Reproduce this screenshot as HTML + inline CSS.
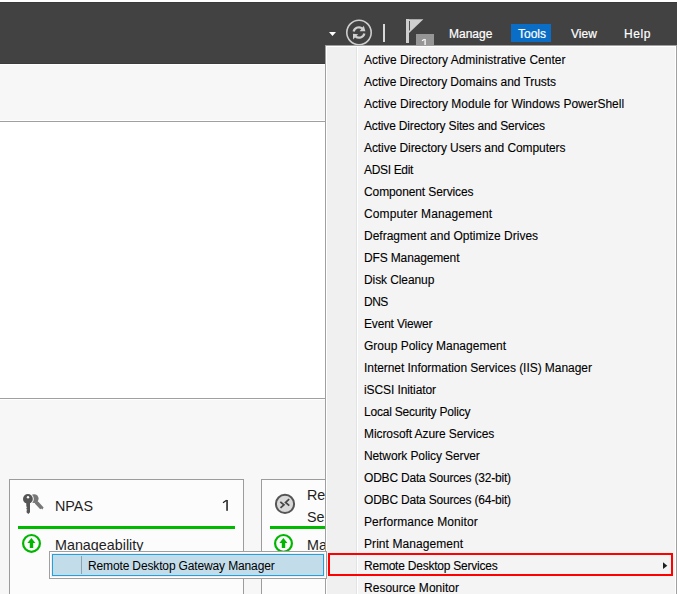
<!DOCTYPE html>
<html>
<head>
<meta charset="utf-8">
<style>
*{margin:0;padding:0;box-sizing:border-box}
html,body{width:677px;height:594px;overflow:hidden;background:#f7f7f7;font-family:"Liberation Sans",sans-serif}
.abs{position:absolute}
#hdr{left:0;top:0;width:677px;height:64px;background:#424242;border-top:2px solid #ffffff}
#hdrtop{left:0;top:2px;width:677px;height:1px;background:#3a3a3a}
#hdrline{left:0;top:63px;width:677px;height:1px;background:#3b3b3b}
#band{left:0;top:64px;width:677px;height:57px;background:#f7f7f7}
#bandhi{left:0;top:64px;width:677px;height:1px;background:#fdfdfd}
#bandw{left:0;top:120px;width:677px;height:1px;background:#ffffff}
#line1{left:0;top:121px;width:677px;height:1px;background:#a0a0a0}
#white{left:0;top:122px;width:677px;height:276px;background:#ffffff}
#line2{left:0;top:398px;width:677px;height:1px;background:#a0a0a0}
#line2w{left:0;top:399px;width:677px;height:1px;background:#ffffff}
.tile{background:#fcfcfc;border:1px solid #9c9c9c;border-bottom:none}
.green{background:#00ba00;height:3px}
.ttl{font-size:15px;transform-origin:0 0;transform:scaleX(0.955);color:#1e1e1e;white-space:nowrap;line-height:22px}
.mi{position:absolute;left:364px;font-size:12px;color:#000000;-webkit-text-stroke:0.1px #000;white-space:nowrap;line-height:22px;height:22px}
.hm{position:absolute;font-size:12px;color:#ffffff;white-space:nowrap;line-height:18px;top:25px;-webkit-text-stroke:0.2px #ffffff}
</style>
</head>
<body>
<div id="hdr" class="abs"></div>
<div id="hdrline" class="abs"></div>
<div id="hdrtop" class="abs"></div>
<div id="band" class="abs"></div>
<div id="bandhi" class="abs"></div>
<div id="bandw" class="abs"></div>
<div id="line1" class="abs"></div>
<div id="white" class="abs"></div>
<div id="line2" class="abs"></div>
<div id="line2w" class="abs"></div>

<!-- header icons -->
<svg class="abs" style="left:0;top:0" width="677" height="64" viewBox="0 0 677 64">
  <polygon points="329,32 336,32 332.5,36" fill="#ffffff"/>
  <circle cx="359" cy="32.5" r="12.2" fill="none" stroke="#cfcfcf" stroke-width="1.6"/>
  <path d="M353.6,31.5 A5.6,5.6 0 0 1 362.6,28.6" fill="none" stroke="#cfcfcf" stroke-width="2.2"/>
  <polygon points="363.8,25.8 365.4,31.2 359.6,31.3" fill="#cfcfcf"/>
  <path d="M364.4,33.5 A5.6,5.6 0 0 1 355.4,36.4" fill="none" stroke="#cfcfcf" stroke-width="2.2"/>
  <polygon points="353,39.5 353,33.8 358.2,34.2" fill="#cfcfcf"/>
  <rect x="383" y="24" width="2" height="18" fill="#d8d8d8"/>
  <rect x="406" y="19" width="3" height="24" fill="#cfcfcf"/>
  <polygon points="409,19.2 423.4,19.2 409,33" fill="#cfcfcf"/>
  <rect x="409" y="21" width="1" height="9.5" fill="#505050"/>
  <rect x="416" y="34" width="18" height="12" fill="#969696"/>
  <rect x="424.4" y="39" width="1.4" height="7" fill="#f4f4f4"/>
  <path d="M422,40.8 L424.6,39.2" stroke="#ffffff" stroke-width="1.1" fill="none"/>
</svg>
<div class="abs" style="left:511px;top:24px;width:40px;height:18px;background:#0a6ec6"></div>
<div class="hm" style="left:449px">Manage</div>
<div class="hm" style="left:518px">Tools</div>
<div class="hm" style="left:571px">View</div>
<div class="hm" style="left:624px;letter-spacing:0.6px">Help</div>

<!-- tiles -->
<div class="abs tile" style="left:9px;top:479px;width:235px;height:115px"></div>
<div class="abs tile" style="left:261px;top:479px;width:200px;height:115px"></div>
<div class="abs green" style="left:18px;top:526px;width:217px"></div>
<div class="abs green" style="left:270px;top:526px;width:100px"></div>

<svg class="abs" style="left:0;top:480px" width="340" height="114" viewBox="0 480 340 114">
  <!-- back key -->
  <g fill="#777777">
    <circle cx="34.2" cy="498.6" r="4.4"/>
    <path d="M36.5,500.5 L38.6,502 L43.6,507.6 L42.4,509.6 L41.2,508.6 L40.3,509.3 L39.2,508.3 L38.6,507.4 L34.8,503.4 Z"/>
  </g>
  <circle cx="27.9" cy="498.9" r="5.9" fill="#fcfcfc"/>
  <!-- front key -->
  <g fill="#555555">
    <circle cx="27.9" cy="498.9" r="4.9"/>
    <path d="M26.3,502 L30,502 L30,512.2 L28.4,514 L26.6,512.6 L26.6,510.4 L27.4,509.8 L26.4,509.2 L26.4,507.8 L27.3,507.2 L26.3,506.6 Z"/>
  </g>
  <circle cx="28" cy="497.3" r="1.2" fill="#fcfcfc"/>
  <!-- green circles -->
  <circle cx="31.5" cy="543.4" r="8.4" fill="none" stroke="#00b600" stroke-width="2.2"/>
  <polygon points="31.4,538 35.4,543 33.2,543 33.2,548 29.8,548 29.8,543 27.4,543" fill="#00b600"/>
  <circle cx="283.5" cy="543.4" r="8.4" fill="none" stroke="#00b600" stroke-width="2.2"/>
  <polygon points="283.4,538 287.4,543 285.2,543 285.2,548 281.8,548 281.8,543 279.4,543" fill="#00b600"/>
  <!-- rd icon -->
  <circle cx="285" cy="503.9" r="9.1" fill="#d9d9d9" stroke="#555555" stroke-width="2"/>
  <polyline points="280.3,501.9 283.9,504.8 280.5,507.9" fill="none" stroke="#474747" stroke-width="1.8"/>
  <polyline points="289.2,499.2 285.6,502.4 289.3,505.6" fill="none" stroke="#474747" stroke-width="1.8"/>
</svg>

<div class="abs ttl" style="left:55px;top:495px">NPAS</div>
<svg class="abs" style="left:220px;top:497px" width="12" height="16" viewBox="220 497 12 16"><rect x="226.3" y="500" width="1.5" height="10.8" fill="#1a1a1a"/><path d="M223,502.8 L226.6,500.3" stroke="#1a1a1a" stroke-width="1.2" fill="none"/></svg>
<div class="abs ttl" style="left:55px;top:534px">Manageability</div>
<div class="abs ttl" style="left:307px;top:484px">Remote Desktop</div>
<div class="abs ttl" style="left:307px;top:506px">Services</div>
<div class="abs ttl" style="left:307px;top:534px">Manageability</div>

<!-- tools menu -->
<div class="abs" style="left:325px;top:45px;width:352px;height:560px;background:#a0a0a0"></div>
<div class="abs" style="left:326px;top:46px;width:350px;height:560px;background:#ffffff"></div>
<div class="abs" style="left:327px;top:47px;width:348px;height:560px;background:#f4f4f4"></div>
<div class="abs" style="left:327px;top:47px;width:29px;height:560px;background:#f0f0f0"></div>
<div class="abs" style="left:356px;top:47px;width:1px;height:560px;background:#e2e3e3"></div>
<div class="abs" style="left:357px;top:47px;width:1px;height:560px;background:#ffffff"></div>

<div class="mi" style="top:49px">Active Directory Administrative Center</div>
<div class="mi" style="top:71px;letter-spacing:-0.059px">Active Directory Domains and Trusts</div>
<div class="mi" style="top:93px">Active Directory Module for Windows PowerShell</div>
<div class="mi" style="top:115px;letter-spacing:-0.165px">Active Directory Sites and Services</div>
<div class="mi" style="top:137px;letter-spacing:-0.074px">Active Directory Users and Computers</div>
<div class="mi" style="top:159px;letter-spacing:-0.337px">ADSI Edit</div>
<div class="mi" style="top:181px;letter-spacing:-0.106px">Component Services</div>
<div class="mi" style="top:203px;letter-spacing:0.117px">Computer Management</div>
<div class="mi" style="top:225px">Defragment and Optimize Drives</div>
<div class="mi" style="top:247px;letter-spacing:-0.146px">DFS Management</div>
<div class="mi" style="top:269px;letter-spacing:-0.091px">Disk Cleanup</div>
<div class="mi" style="top:291px;letter-spacing:-0.500px">DNS</div>
<div class="mi" style="top:313px;letter-spacing:-0.182px">Event Viewer</div>
<div class="mi" style="top:335px">Group Policy Management</div>
<div class="mi" style="top:357px;letter-spacing:-0.052px">Internet Information Services (IIS) Manager</div>
<div class="mi" style="top:379px;letter-spacing:-0.093px">iSCSI Initiator</div>
<div class="mi" style="top:401px;letter-spacing:-0.215px">Local Security Policy</div>
<div class="mi" style="top:423px;letter-spacing:-0.074px">Microsoft Azure Services</div>
<div class="mi" style="top:445px;letter-spacing:-0.110px">Network Policy Server</div>
<div class="mi" style="top:467px;letter-spacing:-0.200px">ODBC Data Sources (32-bit)</div>
<div class="mi" style="top:489px;letter-spacing:-0.200px">ODBC Data Sources (64-bit)</div>
<div class="mi" style="top:511px;letter-spacing:0.094px">Performance Monitor</div>
<div class="mi" style="top:533px;letter-spacing:0.067px">Print Management</div>
<div class="mi" style="top:555px;letter-spacing:-0.227px">Remote Desktop Services</div>
<div class="mi" style="top:577px;letter-spacing:0.020px">Resource Monitor</div>

<div class="abs" style="left:328px;top:553px;width:345px;height:23px;border:2px solid #ff0000"></div>
<svg class="abs" style="left:660px;top:558px" width="12" height="14" viewBox="0 0 12 14">
  <polygon points="3,4.3 7.3,7.7 3,11.1" fill="#1e1e1e"/>
</svg>
<!-- popup submenu -->
<div class="abs" style="left:49px;top:551px;width:278px;height:28px;background:#f0f0f0;border:1px solid #a0a0a0"></div>
<div class="abs" style="left:50px;top:552px;width:276px;height:26px;border:1px solid #ffffff"></div>
<div class="abs" style="left:52px;top:554px;width:272px;height:22px;background:#c3dcea;border:1px solid #26a0da"></div>
<div class="abs" style="left:81px;top:556px;width:1px;height:18px;background:#8aa4b4"></div>
<div class="abs" style="left:88px;top:555px;font-size:12px;letter-spacing:-0.14px;line-height:22px;color:#000000;white-space:nowrap">Remote Desktop Gateway Manager</div>

</body>
</html>
